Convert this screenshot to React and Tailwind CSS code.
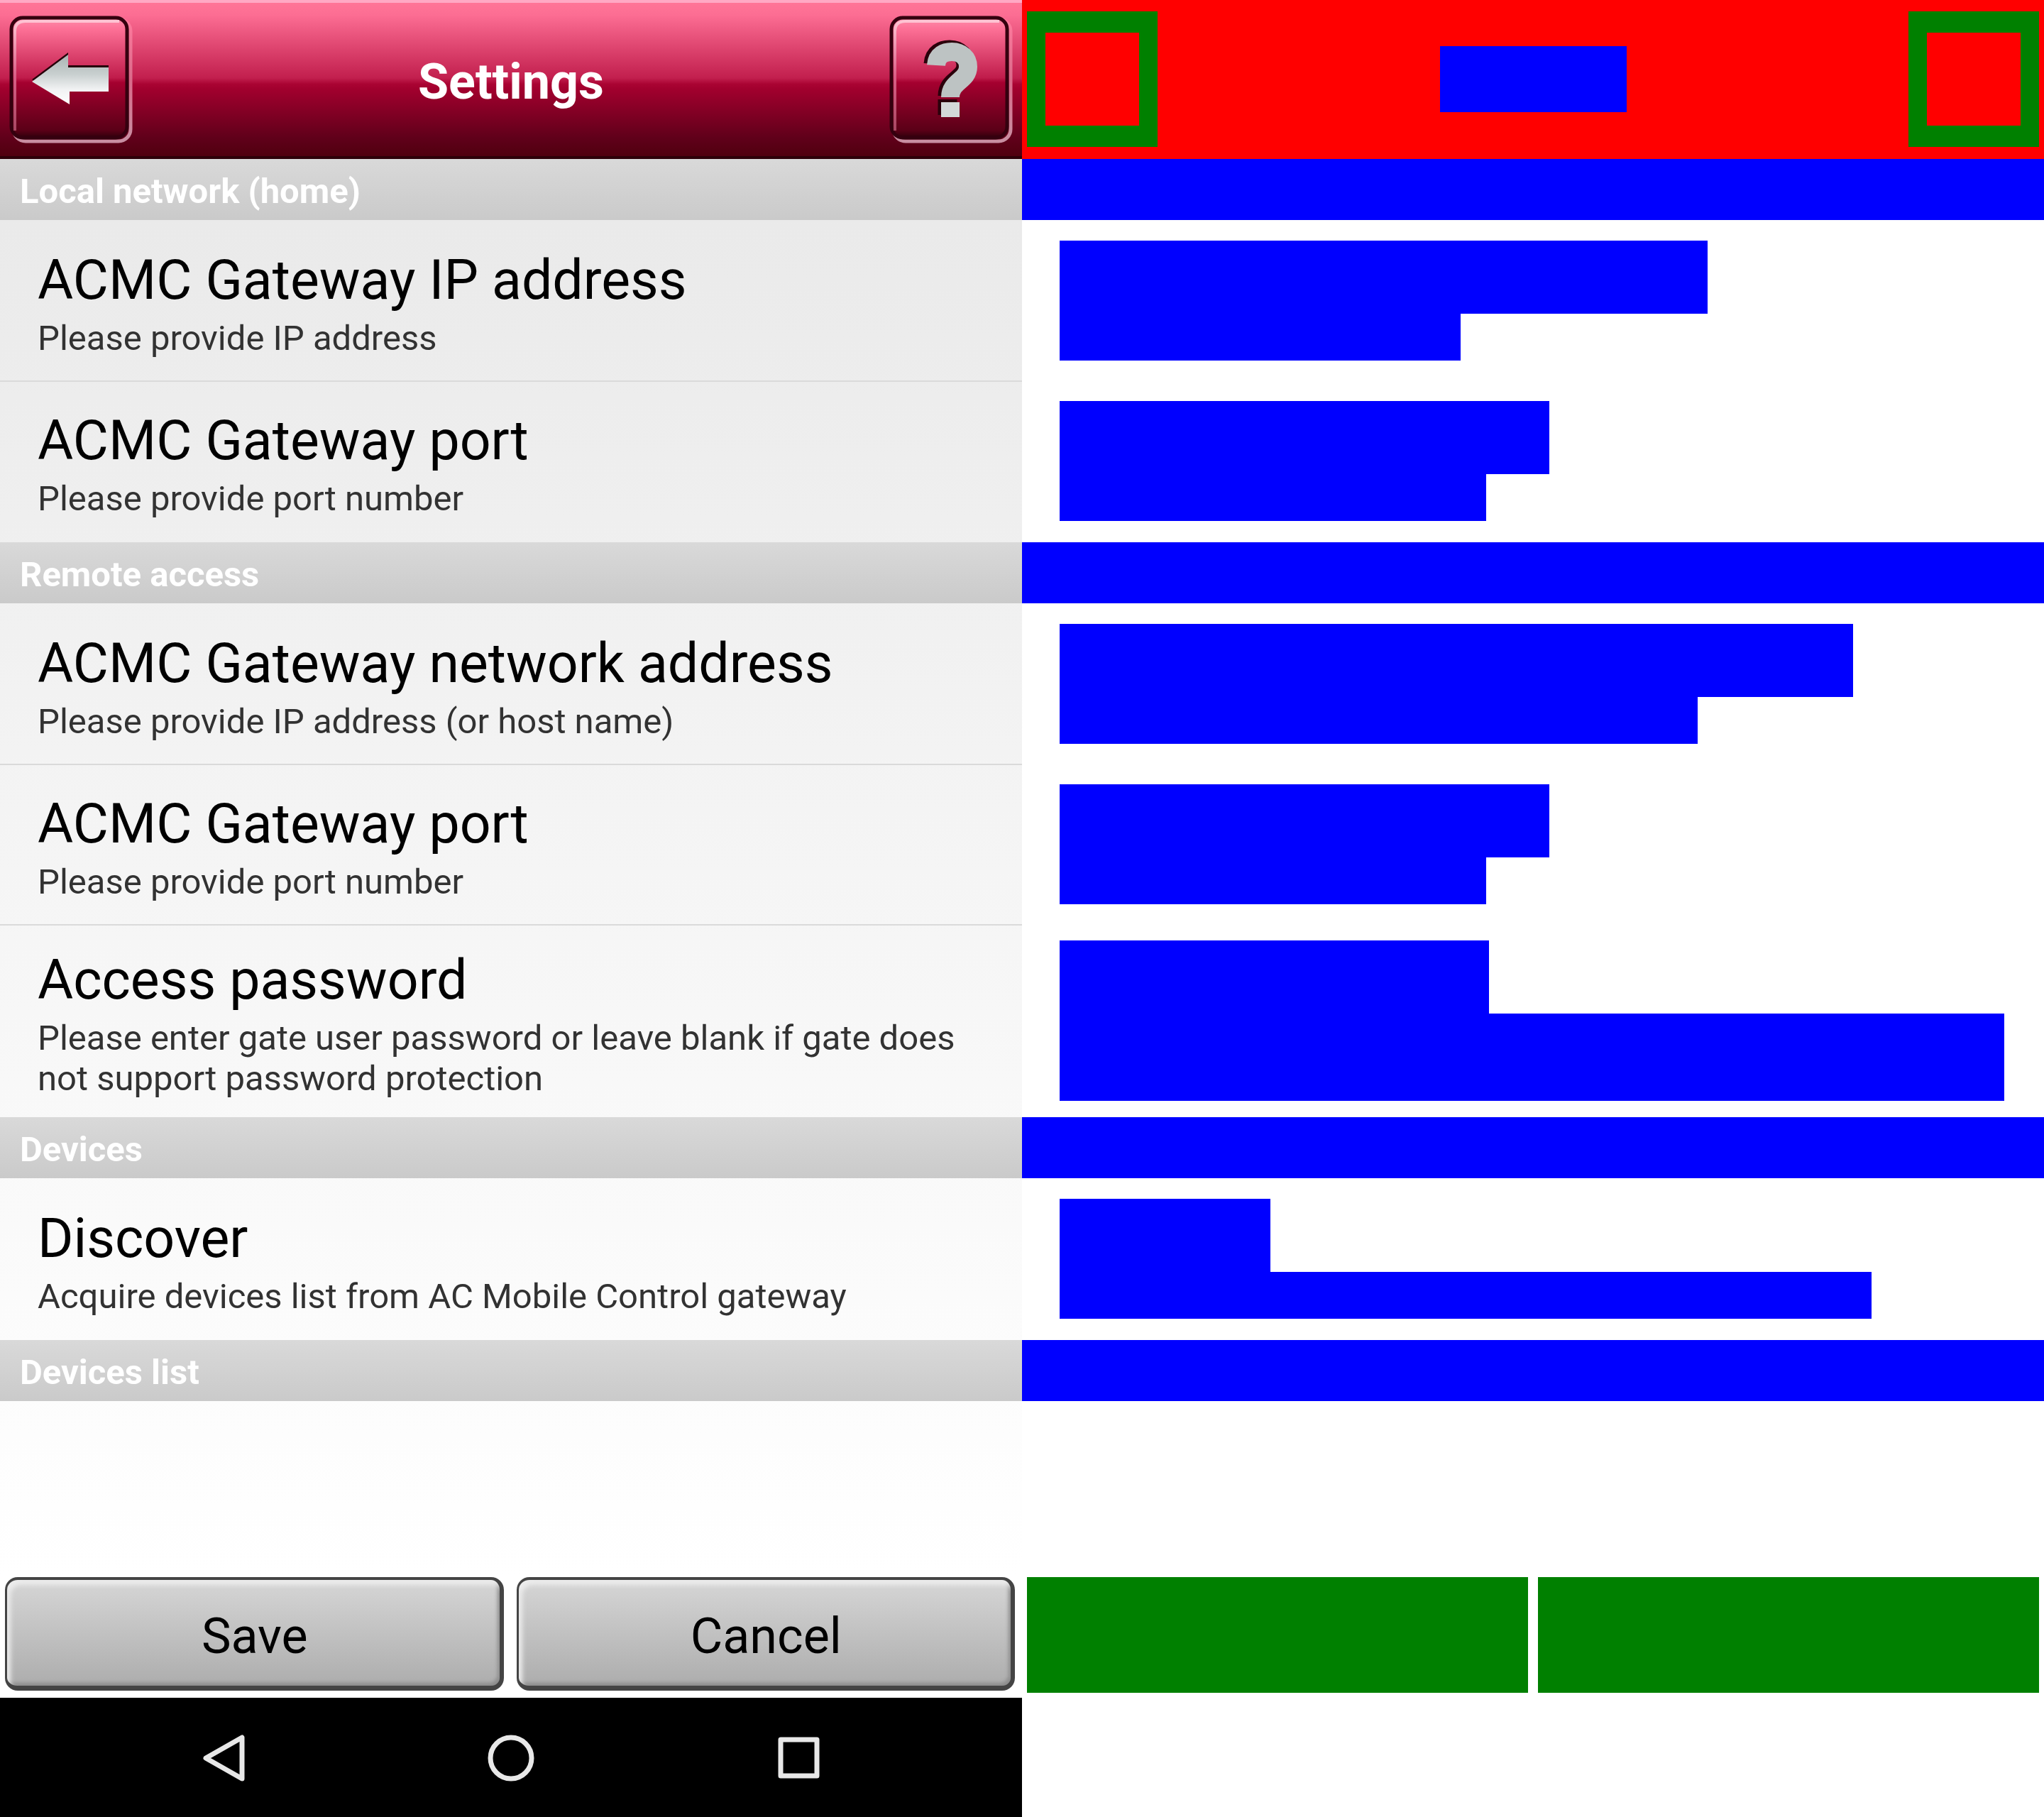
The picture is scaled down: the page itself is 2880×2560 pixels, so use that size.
import React from "react";

const sections = [
  { name: "Local network (home)", rows: [
    { title: "ACMC Gateway IP address", sub: "Please provide IP address", tw: 913, sw: 565 },
    { title: "ACMC Gateway port", sub: "Please provide port number", tw: 690, sw: 601 },
  ] },
  { name: "Remote access", rows: [
    { title: "ACMC Gateway network address", sub: "Please provide IP address (or host name)", tw: 1118, sw: 899 },
    { title: "ACMC Gateway port", sub: "Please provide port number", tw: 690, sw: 601 },
    { title: "Access password", sub: "Please enter gate user password or leave blank if gate does not support password protection", tw: 605, sw: 1331, tall: true },
  ] },
  { name: "Devices", rows: [
    { title: "Discover", sub: "Acquire devices list from AC Mobile Control gateway", tw: 297, sw: 1144 },
  ] },
  { name: "Devices list", rows: [] },
];

function rowHeight(row, last) {
  if (row.tall) return "min-h-[272px]";
  return last ? "min-h-[228px]" : "min-h-[226px]";
}

const arrow = "M45 115 L96 77 V95 H153 V129 H98 V147 Z";

function Gradients() {
  return (
    <defs>
      <linearGradient id="metal" x1="0" y1="0" x2="0" y2="1">
        <stop offset="0" stopColor="#a9b3b2" />
        <stop offset="0.4" stopColor="#c9d0d0" />
        <stop offset="0.7" stopColor="#f1f2f3" />
        <stop offset="1" stopColor="#ffffff" />
      </linearGradient>
      <linearGradient id="face" x1="0" y1="0" x2="0" y2="1">
        <stop offset="0" stopColor="#ff8dab" />
        <stop offset="0.1" stopColor="#fc6f95" />
        <stop offset="0.5" stopColor="#c01c4b" />
        <stop offset="0.54" stopColor="#a5002f" />
        <stop offset="0.94" stopColor="#5a0017" />
        <stop offset="1" stopColor="#30000c" />
      </linearGradient>
      <linearGradient id="light" x1="0" y1="0" x2="0" y2="1">
        <stop offset="0" stopColor="#ffc4d3" />
        <stop offset="0.5" stopColor="#d95f86" />
        <stop offset="1" stopColor="#a84863" />
      </linearGradient>
      <linearGradient id="outer" x1="0" y1="0" x2="0" y2="1">
        <stop offset="0" stopColor="#ff7a9d" />
        <stop offset="0.5" stopColor="#d96a8a" />
        <stop offset="1" stopColor="#c98fa2" />
      </linearGradient>
    </defs>
  );
}

function Frame({ children }) {
  return (
    <svg viewBox="0 0 188 224" className="block h-full w-full" aria-hidden="true">
      <Gradients />
      <rect x="19" y="27" width="165" height="172" rx="17" fill="none" stroke="url(#outer)" strokeWidth="5" />
      <rect x="16" y="25" width="163" height="169" rx="16" fill="url(#face)" stroke="#35000f" strokeWidth="5" />
      <path d="M21 184 V44 Q21 30 36 30 H168" fill="none" stroke="url(#light)" strokeWidth="4" />
      {children}
    </svg>
  );
}

function Heading({ children }) {
  return (
    <h2 className="flex h-[86px] items-center bg-linear-to-b from-[#d9d9d9] to-[#cacaca] px-7 pt-1 text-[49px] leading-[57px] font-bold text-white">
      {children}
    </h2>
  );
}

function PreferenceRow({ row, first, last }) {
  const top = first ? "pt-9" : row.tall ? "border-t-2 border-[#dadada] pt-7" : "border-t-2 border-[#dadada] pt-[34px]";
  return (
    <button
      type="button"
      className={"flex w-full flex-col justify-start gap-[3px] pr-14 pl-[53px] text-left " + rowHeight(row, last) + " " + top}
    >
      <span className="block text-[77px] leading-[99px] text-black">{row.title}</span>
      <span className="block text-[49px] leading-[57px] text-[#323232]">{row.sub}</span>
    </button>
  );
}

function PushButton({ children }) {
  return (
    <button
      type="button"
      className="flex h-40 flex-1 items-center justify-center rounded-[18px] border-t-4 border-r-[6px] border-b-[7px] border-l-[3px] border-[#444] bg-linear-to-b from-[#d6d6d6] to-[#adadad] pt-2 pl-1 text-[70px] leading-[82px] text-black shadow-[inset_5px_7px_6px_#ececec,inset_-3px_-4px_5px_#8c8c8c]"
    >
      {children}
    </button>
  );
}

function SettingsScreen() {
  return (
    <main className="flex min-h-screen min-w-0 flex-col bg-white">
      <header className="grid h-56 shrink-0 grid-cols-[1fr_auto_1fr] items-center border-t-4 border-b-4 border-t-[#ffa9c4] border-b-[#2d0009] bg-[linear-gradient(#ff7597_0%,#fc6d93_8%,#c21f4e_49%,#aa0433_53%,#a2002e_56%,#60001a_88%,#50000f_100%)]">
        <button type="button" aria-label="Back" className="-my-1 h-56 w-[188px]">
          <Frame>
            <path d={arrow} fill="#250009" transform="translate(0 -3)" />
            <path d={arrow} fill="url(#metal)" />
          </Frame>
        </button>
        <h1 className="pt-[6px] text-[70px] leading-[82px] font-bold text-white">Settings</h1>
        <button type="button" aria-label="Help" className="-my-1 mr-3 h-56 w-[188px] justify-self-end">
          <Frame>
            <g fill="none" stroke="#2b000b" transform="translate(-3 -2)">
              <path d="M78 92 C79 77 90 72 101 72 C115 72 124 82 124 94 C124 114 98 114 98 137" strokeWidth="27" />
              <path d="M98 142 V164" strokeWidth="27" />
            </g>
            <g fill="none" stroke="#bdc3c3">
              <path d="M79 92 C80 77 91 73 101 73 C115 73 124 82 124 94 C124 114 99 114 99 137" strokeWidth="26" />
              <path d="M99 144 V165" stroke="#d3d8d8" strokeWidth="26" />
            </g>
          </Frame>
        </button>
      </header>
      <div className="flex flex-1 flex-col bg-linear-to-b from-[#e9e9e9] via-[#f5f5f5] to-white">
        {sections.map((s) => (
          <section key={s.name}>
            <Heading>{s.name}</Heading>
            {s.rows.map((r, i) => (
              <PreferenceRow key={r.title} row={r} first={i === 0} last={i === s.rows.length - 1} />
            ))}
          </section>
        ))}
      </div>
      <div className="flex shrink-0 gap-[18px] bg-white pr-[10px] pb-[10px] pl-[7px]">
        <PushButton>Save</PushButton>
        <PushButton>Cancel</PushButton>
      </div>
      <nav aria-label="System" className="flex h-[168px] shrink-0 items-center justify-center gap-[337px] bg-black pt-[2px]">
        <button type="button" aria-label="Previous screen">
          <svg className="h-[68px] w-[68px]" viewBox="0 0 68 68" fill="none" stroke="#e8e8e8" strokeWidth="7" strokeLinejoin="round"><path d="M9 34 L60 5 V63 Z" /></svg>
        </button>
        <button type="button" aria-label="Home">
          <svg className="h-[68px] w-[68px]" viewBox="0 0 68 68" fill="none" stroke="#e8e8e8" strokeWidth="7"><circle cx="34" cy="34" r="29" /></svg>
        </button>
        <button type="button" aria-label="Recent apps">
          <svg className="h-[68px] w-[68px]" viewBox="0 0 68 68" fill="none" stroke="#e8e8e8" strokeWidth="7" strokeLinejoin="round"><rect x="9" y="8" width="51" height="51" /></svg>
        </button>
      </nav>
    </main>
  );
}

function Blueprint() {
  return (
    <aside aria-label="Layout map" className="flex min-h-screen min-w-0 flex-col bg-white">
      <div className="flex h-56 shrink-0 items-center justify-between bg-[#ff0000] px-[7px] pb-px">
        <div className="h-[191px] w-[184px] border-x-[26px] border-y-[30px] border-[#008000]" />
        <div className="h-[93px] w-[263px] bg-[#0000ff]" />
        <div className="h-[191px] w-[184px] border-x-[26px] border-y-[30px] border-[#008000]" />
      </div>
      <div className="flex-1">
        {sections.map((s) => (
          <div key={s.name}>
            <div className="h-[86px] bg-[#0000ff]" />
            {s.rows.map((r, i) => (
              <div
                key={r.title}
                className={"pl-[53px] " + rowHeight(r, i === s.rows.length - 1) + (r.tall ? " pt-[23px]" : " pt-[29px]")}
              >
                <div className="h-[103px] bg-[#0000ff]" style={{ width: r.tw }} />
                <div className={(r.tall ? "h-[123px]" : "h-[66px]") + " bg-[#0000ff]"} style={{ width: r.sw }} />
              </div>
            ))}
          </div>
        ))}
      </div>
      <div className="mb-[175px] flex h-[163px] shrink-0 gap-[14px] px-[7px]">
        <div className="flex-1 bg-[#008000]" />
        <div className="flex-1 bg-[#008000]" />
      </div>
    </aside>
  );
}

export default function App() {
  return (
    <div className="grid min-h-screen grid-cols-2 bg-white font-[Roboto,sans-serif]">
      <SettingsScreen />
      <Blueprint />
    </div>
  );
}
